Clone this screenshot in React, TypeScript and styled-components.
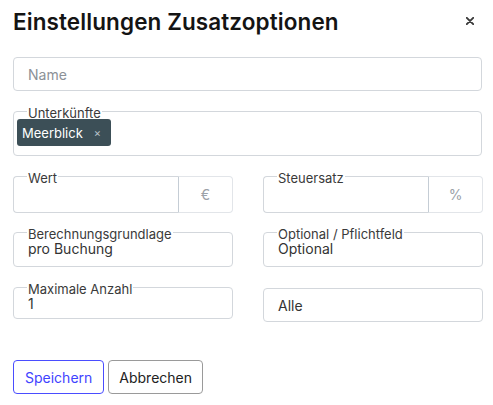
import React from "react";
import styled, { createGlobalStyle } from "styled-components";

const Global = createGlobalStyle`
  html, body { margin: 0; padding: 0; background: #fff; }
  body { font-family: Inter, "Noto Sans", sans-serif; color: #333; }
  * { box-sizing: border-box; }
`;

const Dialog = styled.div`
  width: 493px;
  padding: 8px 11px 0 13px;
  display: flex;
  flex-direction: column;
`;

const Header = styled.div`
  display: flex;
  align-items: flex-start;
  justify-content: space-between;
`;

const Title = styled.h1`
  margin: 0;
  font-size: 22.5px;
  line-height: 28px;
  font-weight: 600;
  color: #141414;
  letter-spacing: 0.1px;
`;

const CloseButton = styled.button`
  border: 0;
  background: none;
  padding: 0;
  margin: 9px 8px 0 0;
  width: 8px;
  height: 8px;
  display: flex;
  cursor: pointer;
`;

const TextInput = styled.div<{ $placeholder?: boolean }>`
  height: 34px;
  border: 1px solid #d3d7dc;
  border-radius: 4px;
  padding: 0 14px;
  display: flex;
  align-items: center;
  font-size: 14px;
  color: ${(p) => (p.$placeholder ? "#8c9197" : "#333")};
`;

const NameInput = styled(TextInput)`
  margin-top: 21px;
`;

const Fieldset = styled.fieldset<{ $tight?: boolean; $joined?: boolean }>`
  margin: 0;
  min-width: 0;
  border: 1px solid #d3d7dc;
  border-radius: ${(p) => (p.$joined ? "4px 0 0 4px" : "4px")};
  ${(p) => (p.$joined ? "border-right-color: #c5cdd5;" : "")}
  padding: 0 ${(p) => (p.$tight ? "3px" : "13px")};
  flex: 1;
`;

const Legend = styled.legend<{ $offset?: number }>`
  font-size: 13px;
  line-height: 13px;
  padding: 4px 1px 0;
  margin-left: ${(p) => p.$offset ?? 0}px;
  color: #3a3a3a;
`;

const Value = styled.div<{ $pb: number }>`
  font-size: 14px;
  line-height: 14px;
  padding: 1px 0 ${(p) => p.$pb}px 1px;
  color: #333;
`;

const ChipArea = styled.div`
  display: flex;
  margin-top: -1px;
  padding-bottom: 9px;
`;

const Chip = styled.div`
  height: 27px;
  background: #3c4f57;
  color: #fff;
  border-radius: 3px;
  display: flex;
  align-items: center;
  padding: 0 10px 0 5px;
  font-size: 13px;
  gap: 11px;
`;

const ChipClose = styled.span`
  font-size: 11px;
  color: #b9c3c8;
  margin-top: 1px;
`;

const Section = styled.div<{ $mt: number }>`
  margin-top: ${(p) => p.$mt}px;
`;

const Grid = styled.div<{ $mt: number; $align?: string }>`
  margin-top: ${(p) => p.$mt}px;
  display: grid;
  grid-template-columns: 220px 220px;
  column-gap: 30px;
  align-items: ${(p) => p.$align ?? "end"};
`;

const Group = styled.div`
  display: flex;
  align-items: flex-end;
`;

const Addon = styled.div`
  width: 54px;
  height: 37px;
  border: 1px solid #e2e5e9;
  border-left: 0;
  border-radius: 0 4px 4px 0;
  display: flex;
  align-items: center;
  justify-content: center;
  font-size: 14px;
  color: #9ba1a7;
`;

const EmptyValue = styled.div`
  height: 27px;
`;

const AlleInput = styled(TextInput)`
  margin-top: 9px;
  height: 34px;
`;

const Actions = styled.div`
  margin-top: 38px;
  display: flex;
  gap: 4px;
`;

const Button = styled.button<{ $primary?: boolean }>`
  height: 34px;
  padding: 0 ${(p) => (p.$primary ? "11px" : "10px")};
  border-radius: 4px;
  background: #fff;
  font-family: Inter, "Noto Sans", sans-serif;
  font-size: 14px;
  border: 1px solid ${(p) => (p.$primary ? "#4a4dff" : "#9a9a9a")};
  color: ${(p) => (p.$primary ? "#3f43ff" : "#222")};
  cursor: pointer;
`;

export default function App() {
  return (
    <>
      <Global />
      <Dialog>
        <Header>
          <Title>Einstellungen Zusatzoptionen</Title>
          <CloseButton aria-label="close">
            <svg width="8" height="8" viewBox="0 0 8 8">
              <path d="M0.8 0.8 L7.2 7.2 M7.2 0.8 L0.8 7.2" stroke="#3a3a3a" strokeWidth="1.9" strokeLinecap="round" />
            </svg>
          </CloseButton>
        </Header>

        <NameInput $placeholder>Name</NameInput>

        <Section $mt={12}>
          <Fieldset $tight>
            <Legend $offset={10}>Unterkünfte</Legend>
            <ChipArea>
              <Chip>
                Meerblick
                <ChipClose>×</ChipClose>
              </Chip>
            </ChipArea>
          </Fieldset>
        </Section>

        <Grid $mt={12}>
          <Group>
            <Fieldset $joined>
              <Legend>Wert</Legend>
              <EmptyValue />
            </Fieldset>
            <Addon>€</Addon>
          </Group>
          <Group>
            <Fieldset $joined>
              <Legend>Steuersatz</Legend>
              <EmptyValue />
            </Fieldset>
            <Addon>%</Addon>
          </Group>
        </Grid>

        <Grid $mt={11}>
          <Fieldset>
            <Legend>Berechnungsgrundlage</Legend>
            <Value $pb={10}>pro Buchung</Value>
          </Fieldset>
          <Fieldset>
            <Legend>Optional / Pflichtfeld</Legend>
            <Value $pb={10}>Optional</Value>
          </Fieldset>
        </Grid>

        <Grid $mt={12} $align="start">
          <Fieldset>
            <Legend>Maximale Anzahl</Legend>
            <Value $pb={7}>1</Value>
          </Fieldset>
          <AlleInput>Alle</AlleInput>
        </Grid>

        <Actions>
          <Button $primary>Speichern</Button>
          <Button>Abbrechen</Button>
        </Actions>
      </Dialog>
    </>
  );
}
